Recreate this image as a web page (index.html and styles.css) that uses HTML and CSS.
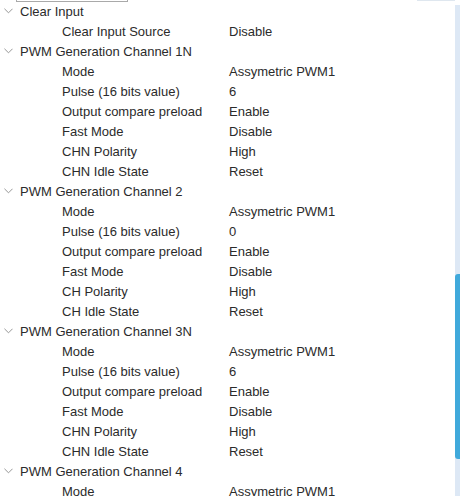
FILE: index.html
```html
<!DOCTYPE html>
<html>
<head>
<meta charset="utf-8">
<link rel="stylesheet" href="styles.css">
</head>
<body>
<div class="page">
  <div class="content">
    <div class="topbar">
      <div class="input-stub"></div>
      <div class="top-line"></div>
    </div>
    <div class="tree">
      <div class="group"><svg class="chev" viewBox="0 0 10 6"><path d="M0.5 0.5 L5 5 L9.5 0.5" /></svg><span>Clear Input</span></div>
      <div class="item"><span class="label">Clear Input Source</span><span class="value">Disable</span></div>

      <div class="group"><svg class="chev" viewBox="0 0 10 6"><path d="M0.5 0.5 L5 5 L9.5 0.5" /></svg><span>PWM Generation Channel 1N</span></div>
      <div class="item"><span class="label">Mode</span><span class="value">Assymetric PWM1</span></div>
      <div class="item"><span class="label">Pulse (16 bits value)</span><span class="value">6</span></div>
      <div class="item"><span class="label">Output compare preload</span><span class="value">Enable</span></div>
      <div class="item"><span class="label">Fast Mode</span><span class="value">Disable</span></div>
      <div class="item"><span class="label">CHN Polarity</span><span class="value">High</span></div>
      <div class="item"><span class="label">CHN Idle State</span><span class="value">Reset</span></div>

      <div class="group"><svg class="chev" viewBox="0 0 10 6"><path d="M0.5 0.5 L5 5 L9.5 0.5" /></svg><span>PWM Generation Channel 2</span></div>
      <div class="item"><span class="label">Mode</span><span class="value">Assymetric PWM1</span></div>
      <div class="item"><span class="label">Pulse (16 bits value)</span><span class="value">0</span></div>
      <div class="item"><span class="label">Output compare preload</span><span class="value">Enable</span></div>
      <div class="item"><span class="label">Fast Mode</span><span class="value">Disable</span></div>
      <div class="item"><span class="label">CH Polarity</span><span class="value">High</span></div>
      <div class="item"><span class="label">CH Idle State</span><span class="value">Reset</span></div>

      <div class="group"><svg class="chev" viewBox="0 0 10 6"><path d="M0.5 0.5 L5 5 L9.5 0.5" /></svg><span>PWM Generation Channel 3N</span></div>
      <div class="item"><span class="label">Mode</span><span class="value">Assymetric PWM1</span></div>
      <div class="item"><span class="label">Pulse (16 bits value)</span><span class="value">6</span></div>
      <div class="item"><span class="label">Output compare preload</span><span class="value">Enable</span></div>
      <div class="item"><span class="label">Fast Mode</span><span class="value">Disable</span></div>
      <div class="item"><span class="label">CHN Polarity</span><span class="value">High</span></div>
      <div class="item"><span class="label">CHN Idle State</span><span class="value">Reset</span></div>

      <div class="group"><svg class="chev" viewBox="0 0 10 6"><path d="M0.5 0.5 L5 5 L9.5 0.5" /></svg><span>PWM Generation Channel 4</span></div>
      <div class="item"><span class="label">Mode</span><span class="value">Assymetric PWM1</span></div>
    </div>
  </div>
  <div class="scrollbar">
    <div class="thumb"></div>
  </div>
</div>
</body>
</html>
```
FILE: styles.css
```css
html, body {
  margin: 0;
  padding: 0;
  background: #ffffff;
}
body {
  width: 460px;
  height: 496px;
  overflow: hidden;
  font-family: "Liberation Sans", Arial, sans-serif;
  font-size: 13px;
  color: #2b2b2b;
}
.page {
  display: flex;
  height: 496px;
}
.content {
  flex: 1;
  min-width: 0;
}
.topbar {
  display: flex;
  justify-content: space-between;
  height: 1px;
}
.input-stub {
  margin-left: 16px;
  width: 112px;
  height: 2px;
  box-sizing: border-box;
  border: 1px solid #a9a9a9;
  border-top: none;
}
.top-line {
  width: 38px;
  height: 1px;
  background: #dfe7ef;
}
.tree {
  display: flex;
  flex-direction: column;
}
.group,
.item {
  display: flex;
  align-items: center;
  height: 20px;
  white-space: nowrap;
}
.group {
  padding-left: 4px;
}
.chev {
  width: 9px;
  height: 6px;
  margin-right: 7px;
  fill: none;
  stroke: #8a8a8a;
  stroke-width: 1;
}
.item {
  padding-left: 62px;
}
.label {
  width: 167px;
  flex: none;
}
.value {
  flex: none;
}
.scrollbar {
  width: 5px;
  flex: none;
  margin-top: 5px;
  background: #dde8f5;
  display: flex;
  flex-direction: column;
}
.thumb {
  margin-top: 269px;
  height: 185px;
  background: #40a9db;
  border-radius: 3px 0 0 3px;
}
```
